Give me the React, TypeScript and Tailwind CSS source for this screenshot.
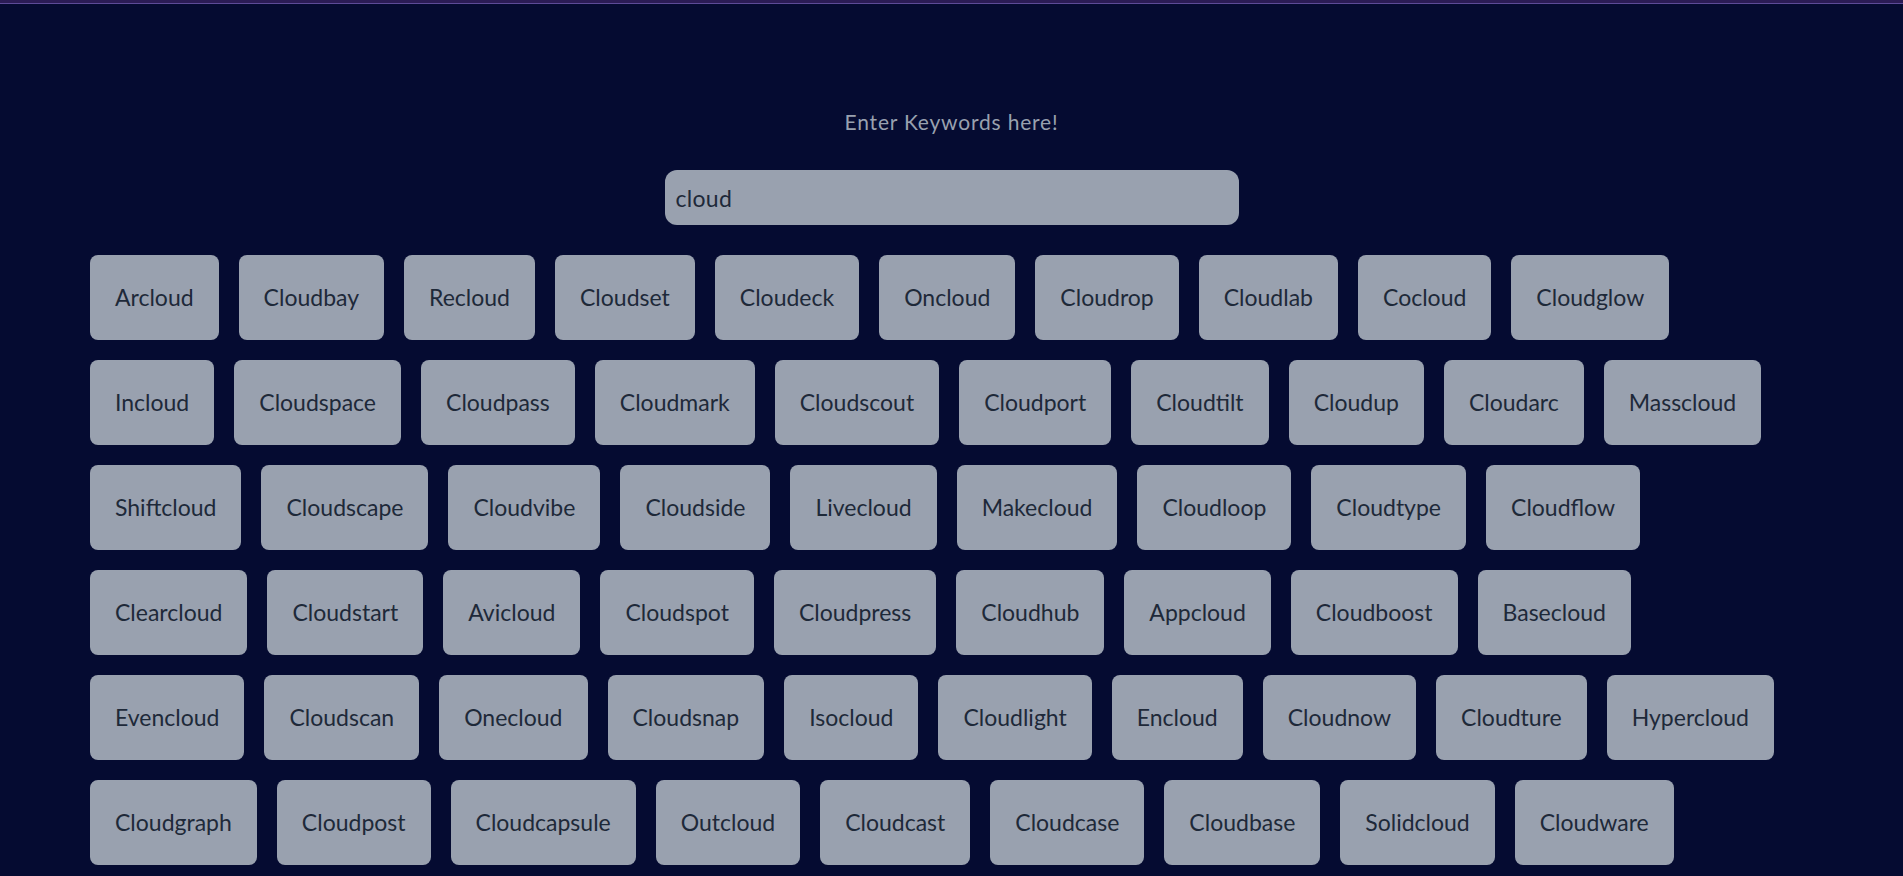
import React, { useState } from 'react';

const rows: string[][] = [
  ['Arcloud', 'Cloudbay', 'Recloud', 'Cloudset', 'Cloudeck', 'Oncloud', 'Cloudrop', 'Cloudlab', 'Cocloud', 'Cloudglow'],
  ['Incloud', 'Cloudspace', 'Cloudpass', 'Cloudmark', 'Cloudscout', 'Cloudport', 'Cloudtilt', 'Cloudup', 'Cloudarc', 'Masscloud'],
  ['Shiftcloud', 'Cloudscape', 'Cloudvibe', 'Cloudside', 'Livecloud', 'Makecloud', 'Cloudloop', 'Cloudtype', 'Cloudflow'],
  ['Clearcloud', 'Cloudstart', 'Avicloud', 'Cloudspot', 'Cloudpress', 'Cloudhub', 'Appcloud', 'Cloudboost', 'Basecloud'],
  ['Evencloud', 'Cloudscan', 'Onecloud', 'Cloudsnap', 'Isocloud', 'Cloudlight', 'Encloud', 'Cloudnow', 'Cloudture', 'Hypercloud'],
  ['Cloudgraph', 'Cloudpost', 'Cloudcapsule', 'Outcloud', 'Cloudcast', 'Cloudcase', 'Cloudbase', 'Solidcloud', 'Cloudware'],
];

export default function App() {
  const [keyword, setKeyword] = useState('cloud');

  return (
    <div className="min-h-screen bg-[#050b31] font-['Lato','Liberation_Sans',sans-serif]">
      <div className="h-[4px] bg-[#2b1c55] border-b border-[#5d4b98]" />

      <div className="flex flex-col items-center pt-[104px]">
        <p className="text-[21px] leading-[28px] tracking-[0.8px] text-gray-400">Enter Keywords here!</p>
        <input
          value={keyword}
          onChange={(e) => setKeyword(e.target.value)}
          className="mt-[34px] w-[574px] h-[55px] rounded-xl bg-gray-400 px-[11px] text-[23px] tracking-[0.3px] text-gray-800 outline-none"
        />
      </div>

      <div className="flex flex-col gap-5 pl-[90px] mt-[30px]">
        {rows.map((row, i) => (
          <div key={i} className="flex gap-5">
            {row.map((name) => (
              <button
                key={name}
                className="h-[85px] px-[25px] rounded-lg bg-gray-400 text-[23px] text-gray-800"
              >
                {name}
              </button>
            ))}
          </div>
        ))}
      </div>
    </div>
  );
}
